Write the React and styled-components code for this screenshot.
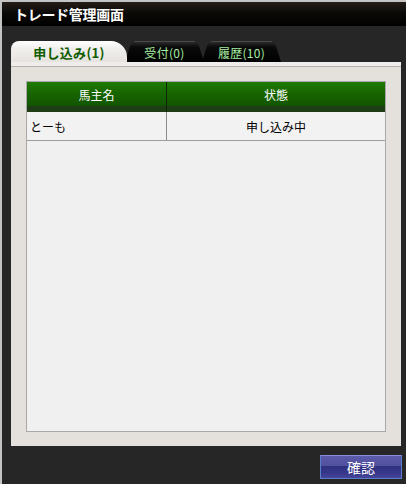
import React, { useState } from 'react';
import styled, { createGlobalStyle } from 'styled-components';

const GlobalStyle = createGlobalStyle`
  html, body {
    margin: 0;
    padding: 0;
    background: #262626;
  }
  body {
    font-family: "Noto Sans CJK JP", "Noto Sans", sans-serif;
  }
`;

const tabs = [
  { label: '申し込み(1)' },
  { label: '受付(0)' },
  { label: '履歴(10)' },
];

const rows = [{ name: 'とーも', status: '申し込み中' }];

const App = () => {
  const [active, setActive] = useState(0);

  return (
    <>
      <GlobalStyle />
      <Window>
        <TitleBar>トレード管理画面</TitleBar>
        <Body>
          <TabRow>
            {tabs.map((tab, i) => (
              <Tab key={tab.label} $active={i === active} onClick={() => setActive(i)}>
                {tab.label}
              </Tab>
            ))}
          </TabRow>
          <Panel>
            <Table>
              <HeaderRow>
                <HeadCell $w={140}>馬主名</HeadCell>
                <HeadCell>状態</HeadCell>
              </HeaderRow>
              {rows.map((row) => (
                <Row key={row.name}>
                  <Cell $w={140} $left>{row.name}</Cell>
                  <Cell>{row.status}</Cell>
                </Row>
              ))}
            </Table>
          </Panel>
          <Footer>
            <ConfirmButton>確認</ConfirmButton>
          </Footer>
        </Body>
      </Window>
    </>
  );
};

const Window = styled.div`
  width: 404px;
  height: 482px;
  border-left: 2px solid #c4c4c4;
  border-top: 2px solid #c4c4c4;
  background: #262626;
  display: flex;
  flex-direction: column;
`;

const TitleBar = styled.div`
  height: 24px;
  background: linear-gradient(to bottom, #231d18 0%, #0c0a08 45%, #000 100%);
  color: #fff;
  font-weight: bold;
  font-size: 14px;
  letter-spacing: -0.3px;
  line-height: 24px;
  padding-left: 12px;
`;

const Body = styled.div`
  flex: 1;
  display: flex;
  flex-direction: column;
  padding-top: 15px;
`;

const TabRow = styled.div`
  display: flex;
  align-items: flex-end;
  height: 21px;
  padding-left: 9px;
`;

const Tab = styled.div`
  position: relative;
  z-index: ${({ $active }) => ($active ? 2 : 1)};
  height: 21px;
  box-sizing: border-box;
  display: flex;
  align-items: center;
  justify-content: center;
  cursor: pointer;
  font-size: ${({ $active }) => ($active ? '13px' : '12px')};
  font-weight: ${({ $active }) => ($active ? 'bold' : 'normal')};
  letter-spacing: 0.3px;
  color: ${({ $active }) => ($active ? '#105c00' : '#a6eea0')};
  width: ${({ $active }) => ($active ? '116px' : '79px')};
  margin-left: ${({ $active }) => ($active ? '0' : '-2px')};
  border-radius: ${({ $active }) => ($active ? '8px 16px 0 0' : '0')};
  clip-path: ${({ $active }) =>
    $active
      ? 'none'
      : 'polygon(0 100%, 5px 5px, 7px 2px, 10px 0, calc(100% - 10px) 0, calc(100% - 7px) 2px, calc(100% - 5px) 5px, 100% 100%)'};
  background: ${({ $active }) =>
    $active
      ? 'linear-gradient(to bottom, #ffffff 0%, #f0eeec 40%, #e6e2de 100%)'
      : 'linear-gradient(to bottom, #6a6a6a 0px, #2a2a2a 1px, #0a0a0a 6px, #000 100%)'};
  padding-top: 1px;
`;

const Panel = styled.div`
  margin-left: 9px;
  width: 390px;
  height: 384px;
  box-sizing: border-box;
  background: #e4e0dc;
  border-top: 4px solid #efedeb;
  box-shadow: inset 0 1px 0 #b4b0ac;
  padding: 15px 15px 14px 15px;
  display: flex;
`;

const Table = styled.div`
  flex: 1;
  border: 1px solid #a8a8a8;
  background: #f0f0f0;
  display: flex;
  flex-direction: column;
`;

const HeaderRow = styled.div`
  display: flex;
  height: 30px;
  background: linear-gradient(to bottom, #1f7a02 0%, #176400 40%, #125500 80%, #1f3d14 80%, #1f3d14 100%);
`;

const HeadCell = styled.div`
  width: ${({ $w }) => ($w ? `${$w}px` : 'auto')};
  flex: ${({ $w }) => ($w ? 'none' : '1')};
  box-sizing: border-box;
  color: #fff;
  font-size: 12px;
  display: flex;
  justify-content: center;
  padding-top: 4px;
  border-right: ${({ $w }) => ($w ? '1px solid #0e2606' : 'none')};
`;

const Row = styled.div`
  display: flex;
  height: 28px;
  background: #f2f2f2;
  border-bottom: 1px solid #9c9c9c;
`;

const Cell = styled.div`
  width: ${({ $w }) => ($w ? `${$w}px` : 'auto')};
  flex: ${({ $w }) => ($w ? 'none' : '1')};
  box-sizing: border-box;
  color: #000;
  font-size: 12px;
  display: flex;
  align-items: center;
  justify-content: ${({ $left }) => ($left ? 'flex-start' : 'center')};
  padding-left: ${({ $left }) => ($left ? '3px' : '0')};
  border-right: ${({ $w }) => ($w ? '1px solid #8c8c8c' : 'none')};
`;

const Footer = styled.div`
  display: flex;
  justify-content: flex-end;
  padding: 9px 4px 0 0;
`;

const ConfirmButton = styled.button`
  width: 82px;
  height: 24px;
  box-sizing: border-box;
  border: 1px solid #5b7cc8;
  border-top: 1px solid #8a8ed8;
  background: linear-gradient(to bottom, #5b5bab 0%, #50509e 45%, #30307e 45%, #37378a 75%, #45459a 100%);
  color: #fff;
  font-family: "Noto Sans CJK JP", sans-serif;
  font-size: 14px;
  padding: 0;
  cursor: pointer;
`;

export default App;
